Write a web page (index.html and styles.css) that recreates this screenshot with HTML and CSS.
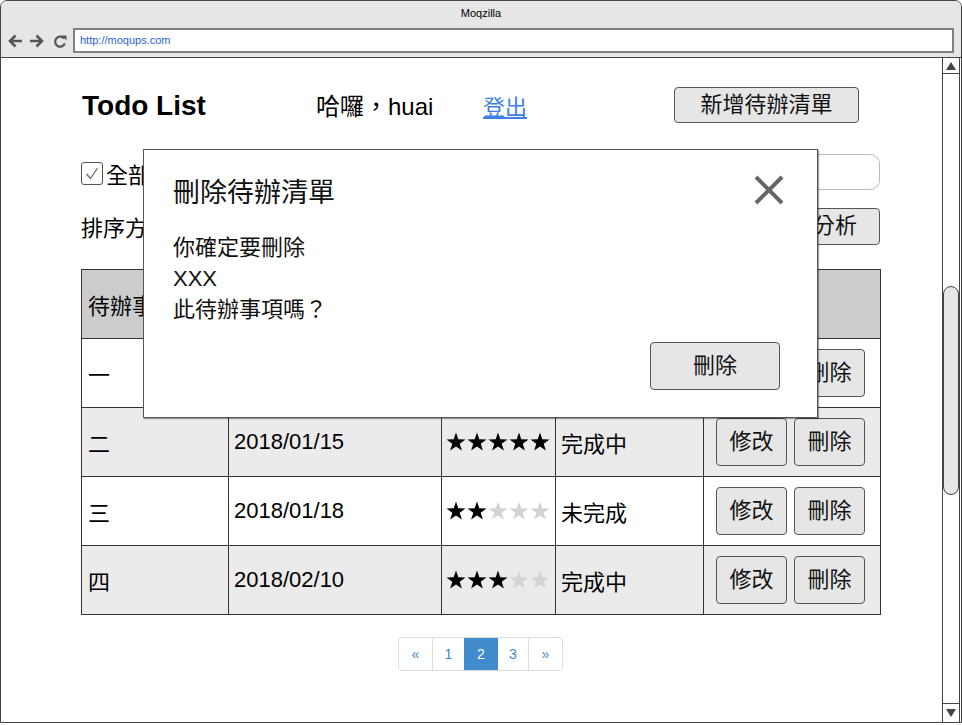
FILE: index.html
```html
<!DOCTYPE html>
<html lang="zh-Hant">
<head>
<meta charset="utf-8">
<title>Todo List</title>
<link rel="stylesheet" href="styles.css">
</head>
<body>
<div class="window">
  <div class="titlebar">
    <div class="wintitle">Moqzilla</div>
    <div class="navrow">
      <svg class="navicons" width="62" height="16" viewBox="0 0 62 16">
        <g fill="none" stroke="#555" stroke-width="2.6" stroke-linecap="butt" stroke-linejoin="miter">
          <path d="M15 8 H3 M8.5 2.5 L3 8 L8.5 13.5"/>
          <path d="M23 8 H35 M29.5 2.5 L35 8 L29.5 13.5"/>
          <path d="M57 5.5 A5 5 0 1 0 57.8 10.5" stroke-width="2.2"/>
        </g>
        <polygon points="54.5,2.5 59.5,2.5 59.5,7.5" fill="#555"/>
      </svg>
      <div class="urlbar">http://moqups.com</div>
    </div>
  </div>
  <div class="content">
    <div class="page">
      <div class="container">
        <div class="header">
          <div class="brand">Todo List</div>
          <div class="greet">哈囉，huai</div>
          <div class="logout"><a href="#">登出</a></div>
          <button class="btn btn-new">新增待辦清單</button>
        </div>
        <div class="filter-row">
          <label class="check-all">
            <span class="checkbox">
              <svg width="20" height="21" viewBox="0 0 20 21"><polyline points="4.5,11 8.5,15.5 15.5,5" fill="none" stroke="#666" stroke-width="1.2"/></svg>
            </span>
            <span>全部完成</span>
          </label>
          <div class="search"></div>
        </div>
        <div class="sort-row">
          <div class="sort-label">排序方式：到期日</div>
          <button class="btn btn-stat">統計分析</button>
        </div>
        <table class="todo">
          <colgroup>
            <col class="c1"><col class="c2"><col class="c3"><col class="c4"><col class="c5">
          </colgroup>
          <tr class="head">
            <th class="name">待辦事項</th><th>到期日</th><th>重要程度</th><th>狀態</th><th class="ops">操作</th>
          </tr>
          <tr>
            <td class="name">一</td><td>2018/01/10</td>
            <td class="stars"><svg width="104" height="20" viewBox="0 0 104 20">
              <polygon fill="#000" points="10,0.5 12.29,7.34 19.51,7.41 13.71,11.71 15.88,18.59 10,14.4 4.12,18.59 6.29,11.71 0.49,7.41 7.71,7.34"/>
              <polygon fill="#000" transform="translate(21 0)" points="10,0.5 12.29,7.34 19.51,7.41 13.71,11.71 15.88,18.59 10,14.4 4.12,18.59 6.29,11.71 0.49,7.41 7.71,7.34"/>
              <polygon fill="#000" transform="translate(42 0)" points="10,0.5 12.29,7.34 19.51,7.41 13.71,11.71 15.88,18.59 10,14.4 4.12,18.59 6.29,11.71 0.49,7.41 7.71,7.34"/>
              <polygon fill="#000" transform="translate(63 0)" points="10,0.5 12.29,7.34 19.51,7.41 13.71,11.71 15.88,18.59 10,14.4 4.12,18.59 6.29,11.71 0.49,7.41 7.71,7.34"/>
              <polygon fill="#d4d4d4" transform="translate(84 0)" points="10,0.5 12.29,7.34 19.51,7.41 13.71,11.71 15.88,18.59 10,14.4 4.12,18.59 6.29,11.71 0.49,7.41 7.71,7.34"/>
            </svg></td>
            <td>未完成</td>
            <td class="ops"><div class="opbtns"><button class="btn btn-op">修改</button><button class="btn btn-op">刪除</button></div></td>
          </tr>
          <tr class="alt">
            <td class="name">二</td><td>2018/01/15</td>
            <td class="stars"><svg width="104" height="20" viewBox="0 0 104 20">
              <polygon fill="#000" points="10,0.5 12.29,7.34 19.51,7.41 13.71,11.71 15.88,18.59 10,14.4 4.12,18.59 6.29,11.71 0.49,7.41 7.71,7.34"/>
              <polygon fill="#000" transform="translate(21 0)" points="10,0.5 12.29,7.34 19.51,7.41 13.71,11.71 15.88,18.59 10,14.4 4.12,18.59 6.29,11.71 0.49,7.41 7.71,7.34"/>
              <polygon fill="#000" transform="translate(42 0)" points="10,0.5 12.29,7.34 19.51,7.41 13.71,11.71 15.88,18.59 10,14.4 4.12,18.59 6.29,11.71 0.49,7.41 7.71,7.34"/>
              <polygon fill="#000" transform="translate(63 0)" points="10,0.5 12.29,7.34 19.51,7.41 13.71,11.71 15.88,18.59 10,14.4 4.12,18.59 6.29,11.71 0.49,7.41 7.71,7.34"/>
              <polygon fill="#000" transform="translate(84 0)" points="10,0.5 12.29,7.34 19.51,7.41 13.71,11.71 15.88,18.59 10,14.4 4.12,18.59 6.29,11.71 0.49,7.41 7.71,7.34"/>
            </svg></td>
            <td>完成中</td>
            <td class="ops"><div class="opbtns"><button class="btn btn-op">修改</button><button class="btn btn-op">刪除</button></div></td>
          </tr>
          <tr>
            <td class="name">三</td><td>2018/01/18</td>
            <td class="stars"><svg width="104" height="20" viewBox="0 0 104 20">
              <polygon fill="#000" points="10,0.5 12.29,7.34 19.51,7.41 13.71,11.71 15.88,18.59 10,14.4 4.12,18.59 6.29,11.71 0.49,7.41 7.71,7.34"/>
              <polygon fill="#000" transform="translate(21 0)" points="10,0.5 12.29,7.34 19.51,7.41 13.71,11.71 15.88,18.59 10,14.4 4.12,18.59 6.29,11.71 0.49,7.41 7.71,7.34"/>
              <polygon fill="#d4d4d4" transform="translate(42 0)" points="10,0.5 12.29,7.34 19.51,7.41 13.71,11.71 15.88,18.59 10,14.4 4.12,18.59 6.29,11.71 0.49,7.41 7.71,7.34"/>
              <polygon fill="#d4d4d4" transform="translate(63 0)" points="10,0.5 12.29,7.34 19.51,7.41 13.71,11.71 15.88,18.59 10,14.4 4.12,18.59 6.29,11.71 0.49,7.41 7.71,7.34"/>
              <polygon fill="#d4d4d4" transform="translate(84 0)" points="10,0.5 12.29,7.34 19.51,7.41 13.71,11.71 15.88,18.59 10,14.4 4.12,18.59 6.29,11.71 0.49,7.41 7.71,7.34"/>
            </svg></td>
            <td>未完成</td>
            <td class="ops"><div class="opbtns"><button class="btn btn-op">修改</button><button class="btn btn-op">刪除</button></div></td>
          </tr>
          <tr class="alt">
            <td class="name">四</td><td>2018/02/10</td>
            <td class="stars"><svg width="104" height="20" viewBox="0 0 104 20">
              <polygon fill="#000" points="10,0.5 12.29,7.34 19.51,7.41 13.71,11.71 15.88,18.59 10,14.4 4.12,18.59 6.29,11.71 0.49,7.41 7.71,7.34"/>
              <polygon fill="#000" transform="translate(21 0)" points="10,0.5 12.29,7.34 19.51,7.41 13.71,11.71 15.88,18.59 10,14.4 4.12,18.59 6.29,11.71 0.49,7.41 7.71,7.34"/>
              <polygon fill="#000" transform="translate(42 0)" points="10,0.5 12.29,7.34 19.51,7.41 13.71,11.71 15.88,18.59 10,14.4 4.12,18.59 6.29,11.71 0.49,7.41 7.71,7.34"/>
              <polygon fill="#d4d4d4" transform="translate(63 0)" points="10,0.5 12.29,7.34 19.51,7.41 13.71,11.71 15.88,18.59 10,14.4 4.12,18.59 6.29,11.71 0.49,7.41 7.71,7.34"/>
              <polygon fill="#d4d4d4" transform="translate(84 0)" points="10,0.5 12.29,7.34 19.51,7.41 13.71,11.71 15.88,18.59 10,14.4 4.12,18.59 6.29,11.71 0.49,7.41 7.71,7.34"/>
            </svg></td>
            <td>完成中</td>
            <td class="ops"><div class="opbtns"><button class="btn btn-op">修改</button><button class="btn btn-op">刪除</button></div></td>
          </tr>
        </table>
        <div class="pager-wrap">
          <div class="pager">
            <span class="p-prev">«</span>
            <span class="p-1">1</span>
            <span class="p-2 active">2</span>
            <span class="p-3">3</span>
            <span class="p-next">»</span>
          </div>
        </div>
      </div>

      <div class="modal">
        <div class="modal-head">
          <div class="modal-title">刪除待辦清單</div>
          <svg class="close" width="30" height="30" viewBox="0 0 30 30">
            <path d="M2 2 L28 28 M28 2 L2 28" stroke="#666" stroke-width="4" fill="none"/>
          </svg>
        </div>
        <div class="modal-body">
          <div>你確定要刪除</div>
          <div>XXX</div>
          <div>此待辦事項嗎？</div>
        </div>
        <div class="modal-foot">
          <button class="btn btn-del">刪除</button>
        </div>
      </div>
    </div>
    <div class="scrollbar">
      <div class="sb-up"><span class="tri-up"></span></div>
      <div class="sb-thumb"></div>
      <div class="sb-space"></div>
      <div class="sb-down"><span class="tri-down"></span></div>
    </div>
  </div>
</div>
</body>
</html>
```
FILE: styles.css
```css
html, body {
  margin: 0;
  padding: 0;
  background: #fff;
}
body {
  font-family: "Liberation Sans", "Noto Sans CJK TC", sans-serif;
  color: #000;
  width: 962px;
  height: 725px;
  overflow: hidden;
}
.window {
  width: 962px;
  height: 723px;
  box-sizing: border-box;
  border: 1px solid #444;
  border-radius: 7px 7px 0 0;
  display: flex;
  flex-direction: column;
  overflow: hidden;
  background: #fff;
}
.titlebar {
  height: 57px;
  flex: none;
  box-sizing: border-box;
  background: #e6e6e6;
  border-bottom: 1px solid #444;
}
.wintitle {
  height: 24px;
  line-height: 24px;
  text-align: center;
  font-size: 11px;
}
.navrow {
  display: flex;
  align-items: center;
  height: 25px;
  margin-top: 3px;
  padding-left: 6px;
}
.navicons {
  display: block;
  flex: none;
}
.urlbar {
  margin-left: 4px;
  width: 881px;
  height: 25px;
  box-sizing: border-box;
  border: 2px solid #808080;
  background: #fff;
  font-size: 11px;
  line-height: 21px;
  padding-left: 5px;
  color: #2a62d8;
}
.content {
  flex: 1;
  display: flex;
  min-height: 0;
}
.page {
  flex: 1;
  position: relative;
  overflow: hidden;
}
.scrollbar {
  width: 16px;
  flex: none;
  border-left: 1px solid #444;
  border-right: 1px solid #444;
  margin-right: 1px;
  display: flex;
  flex-direction: column;
}
.sb-up {
  height: 15px;
  border-bottom: 1px solid #444;
  display: flex;
  align-items: center;
  justify-content: center;
}
.sb-down {
  height: 18px;
  border-top: 1px solid #444;
  display: flex;
  align-items: center;
  justify-content: center;
}
.tri-up {
  width: 0;
  height: 0;
  border-left: 5px solid transparent;
  border-right: 5px solid transparent;
  border-bottom: 8px solid #444;
}
.tri-down {
  width: 0;
  height: 0;
  border-left: 5px solid transparent;
  border-right: 5px solid transparent;
  border-top: 8px solid #444;
}
.sb-thumb {
  margin-top: 212px;
  height: 209px;
  box-sizing: border-box;
  border: 1px solid #444;
  border-radius: 8px;
  background: #e6e6e6;
}
.sb-space {
  flex: 1;
}

/* page */
.container {
  margin-left: 80px;
  width: 799px;
  padding-top: 29px;
}
.header {
  display: flex;
  align-items: center;
  height: 35px;
}
.brand {
  width: 235px;
  font-size: 28px;
  font-weight: bold;
  padding-left: 1px;
  padding-top: 2px;
  box-sizing: border-box;
}
.greet {
  width: 167px;
  font-size: 24px;
}
.logout {
  width: 191px;
  font-size: 22px;
}
.logout a {
  color: #3d80e6;
  text-decoration: underline;
}
.btn {
  box-sizing: border-box;
  background: #e6e6e6;
  border: 1px solid #555;
  border-radius: 4px;
  font-family: "Liberation Sans", "Noto Sans CJK TC", sans-serif;
  font-size: 22px;
  color: #111;
  display: flex;
  align-items: center;
  justify-content: center;
  padding: 0;
  line-height: 1;
}
.btn-new {
  width: 185px;
  height: 36px;
}
.filter-row {
  display: flex;
  justify-content: space-between;
  align-items: flex-start;
  margin-top: 32px;
  height: 36px;
}
.check-all {
  display: flex;
  align-items: center;
  margin-top: 3px;
  font-size: 22px;
  gap: 3px;
}
.checkbox {
  width: 22px;
  height: 23px;
  box-sizing: border-box;
  border: 1px solid #555;
  border-radius: 3px;
  display: flex;
}
.search {
  width: 320px;
  height: 36px;
  box-sizing: border-box;
  border: 1px solid #bbb;
  border-radius: 10px;
}
.sort-row {
  display: flex;
  justify-content: space-between;
  align-items: center;
  margin-top: 18px;
  height: 36px;
  font-size: 22px;
}
.btn-stat {
  width: 134px;
  height: 37px;
}

/* table */
.todo {
  margin-top: 25px;
  border-collapse: collapse;
  table-layout: fixed;
  width: 799px;
}
.c1 { width: 147px; }
.c2 { width: 213px; }
.c3 { width: 114px; }
.c4 { width: 148px; }
.c5 { width: 177px; }
.todo tr {
  height: 69px;
}
.todo th,
.todo td {
  border: 1px solid #333;
  font-size: 22px;
  font-weight: normal;
  text-align: left;
  vertical-align: middle;
  padding: 0 5px;
  white-space: nowrap;
  overflow: hidden;
}
.todo .head {
  background: #cccccc;
}
.todo .alt {
  background: #ebebeb;
}
.todo .name {
  padding-left: 6px;
}
.todo .stars {
  padding-left: 4px;
}
.todo .stars svg {
  display: block;
}
.todo .ops {
  padding-left: 12px;
}
.opbtns {
  display: flex;
  gap: 7px;
}
.btn-op {
  width: 71px;
  height: 48px;
}

/* pagination */
.pager-wrap {
  display: flex;
  justify-content: center;
  margin-top: 22px;
}
.pager {
  display: flex;
  height: 34px;
  box-sizing: border-box;
  border: 1px solid #ddd;
  border-radius: 4px;
  overflow: hidden;
}
.pager span {
  display: flex;
  align-items: center;
  justify-content: center;
  box-sizing: border-box;
  color: #428bca;
  font-size: 14px;
  border-left: 1px solid #ddd;
}
.pager .p-prev { width: 33px; border-left: none; }
.pager .p-1 { width: 32px; }
.pager .p-2 { width: 33px; }
.pager .p-3 { width: 31px; }
.pager .p-next { width: 34px; }
.pager .active {
  background: #428bca;
  border-left-color: #428bca;
  color: #fff;
}
.pager .active + span {
  border-left-color: #428bca;
}

/* modal */
.modal {
  position: absolute;
  left: 142px;
  top: 91px;
  width: 675px;
  height: 269px;
  box-sizing: border-box;
  border: 1px solid #555;
  background: #fff;
  box-shadow: 1px 1px 1px rgba(0, 0, 0, 0.35);
  padding: 20px 33px 0 29px;
  display: flex;
  flex-direction: column;
}
.modal-head {
  display: flex;
  justify-content: space-between;
  align-items: center;
  height: 40px;
}
.modal-title {
  font-size: 27px;
  color: #111;
}
.close {
  display: block;
}
.modal-body {
  margin-top: 22px;
  font-size: 22px;
  line-height: 31px;
  color: #111;
}
.modal-foot {
  display: flex;
  justify-content: flex-end;
  margin-top: 17px;
  padding-right: 4px;
}
.btn-del {
  width: 130px;
  height: 48px;
}
```
